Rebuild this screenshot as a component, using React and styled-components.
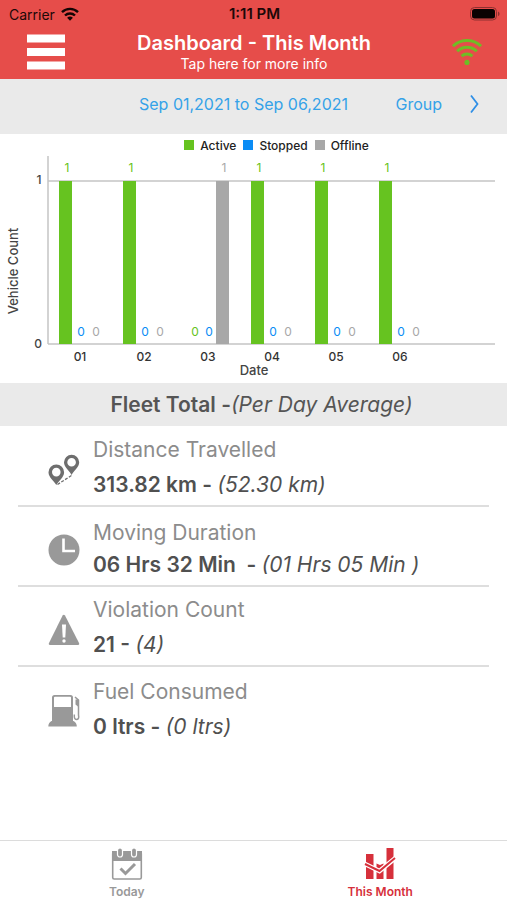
import React from 'react';
import styled, { createGlobalStyle } from 'styled-components';

const days = [
  { label: '01', values: [1, 0, 0] },
  { label: '02', values: [1, 0, 0] },
  { label: '03', values: [0, 0, 1] },
  { label: '04', values: [1, 0, 0] },
  { label: '05', values: [1, 0, 0] },
  { label: '06', values: [1, 0, 0] },
];

const series = [
  { name: 'Active', color: '#66c320' },
  { name: 'Stopped', color: '#0a8cf5' },
  { name: 'Offline', color: '#a8a8a8' },
];

const GlobalStyle = createGlobalStyle`
  * {
    box-sizing: border-box;
  }

  body {
    margin: 0;
    background: #fff;
    font-family: Inter, 'Liberation Sans', sans-serif;
  }

  button {
    border: 0;
    padding: 0;
    background: none;
    font-family: inherit;
    cursor: pointer;
  }
`;

const Screen = styled.div`
  display: flex;
  flex-direction: column;
  min-height: 100vh;
`;

const Header = styled.header`
  background: #e64d4a;
`;

const StatusBar = styled.div`
  display: grid;
  grid-template-columns: 1fr auto 1fr;
  align-items: center;
  height: 28px;
  padding: 0 7px 0 9px;
  color: #1c0808;
  font-size: 14px;
`;

const Carrier = styled.div`
  display: flex;
  align-items: center;
  gap: 6px;
`;

const Clock = styled.div`
  font-size: 15px;
  line-height: 16px;
  font-weight: 600;
`;

const Battery = styled.svg`
  justify-self: end;
`;

const TitleBar = styled.div`
  display: grid;
  grid-template-columns: 56px 1fr 66px;
  align-items: center;
  height: 51px;
  padding: 0 7px 3px 18px;
`;

const IconButton = styled.button`
  display: flex;
  justify-content: center;
  align-items: center;
  height: 48px;
`;

const TitleButton = styled.button`
  color: #fff;
  text-align: center;
`;

const Title = styled.h1`
  margin: 0;
  font-size: 20px;
  line-height: 24px;
  font-weight: 600;
`;

const Subtitle = styled.div`
  font-size: 14px;
  line-height: 18px;
`;

const FilterBar = styled.div`
  display: grid;
  grid-template-columns: 1fr auto 1fr;
  align-items: center;
  height: 55px;
  padding: 0 28px 6px 8px;
  background: #eaeaea;
`;

const FilterButton = styled.button`
  display: flex;
  align-items: center;
  gap: 28px;
  grid-column: ${(props) => props.$column};
  justify-self: ${(props) => (props.$column === 3 ? 'end' : 'center')};
  color: #35a2e8;
  font-size: 16px;
  line-height: 24px;
`;

const ChartCard = styled.section`
  min-height: 249px;
`;

const Legend = styled.div`
  display: flex;
  justify-content: center;
  gap: 7px;
  height: 22px;
  padding-left: 46px;
`;

const LegendItem = styled.div`
  display: flex;
  align-items: center;
  gap: 6px;
  color: #222;
  font-size: 12px;
  font-weight: 500;

  &::before {
    content: '';
    width: 10px;
    height: 10px;
    background: ${(props) => props.$color};
  }
`;

const Plot = styled.svg`
  display: block;
  width: 100%;
  font-size: 12px;
  font-weight: 500;
`;

const SectionHeading = styled.h2`
  margin: 0;
  padding-left: 16px;
  background: #eaeaea;
  color: #555;
  font-size: 21px;
  line-height: 43px;
  font-weight: 600;
  text-align: center;
`;

const Average = styled.em`
  font-weight: 400;
`;

const Stats = styled.main`
  flex: 1;
  padding: 1px 18px 0;
`;

const StatRow = styled.div`
  display: flex;
  align-items: center;
  gap: 13px;
  height: 80px;
  padding: 8px 0 0 30px;
  border-bottom: ${(props) => (props.$last ? '0' : '2px solid #dedede')};
`;

const StatText = styled.div`
  display: flex;
  flex-direction: column;
  gap: ${(props) => (props.$tight ? '4px' : '7px')};
  align-self: flex-end;
  padding-bottom: 6px;
  line-height: 28px;
  white-space: pre;
`;

const StatName = styled.div`
  color: #8c8c8c;
  font-size: 21px;
`;

const StatValue = styled.div`
  color: #505050;
  font-size: 21px;
  font-weight: 600;
`;

const TabBar = styled.nav`
  display: grid;
  grid-template-columns: 1fr 1fr;
  height: 60px;
  border-top: 1px solid #dcdcdc;
`;

const Tab = styled.button`
  display: flex;
  flex-direction: column;
  align-items: center;
  gap: 4px;
  padding-top: 7px;
  color: ${(props) => (props.$active ? '#d6303b' : '#999')};
  font-size: 12px;
  line-height: 16px;
  font-weight: 600;
`;

const CarrierWifi = () => (
  <svg width="18" height="14" viewBox="0 0 18 14" fill="none" stroke="#140404" strokeWidth="2.4">
    <path d="M1 5.2a11.4 11.4 0 0 1 16 0" />
    <path d="M4 8.5a7.2 7.2 0 0 1 10 0" />
    <path d="M9 13.8 6.1 10.8a4.2 4.2 0 0 1 5.8 0z" fill="#140404" stroke="none" />
  </svg>
);

const BatteryIcon = () => (
  <Battery width="30" height="14" viewBox="0 0 30 14">
    <rect x="0.5" y="0.5" width="26" height="12.5" rx="4" fill="none" stroke="#8d3130" />
    <rect x="2" y="2" width="23" height="9.5" rx="2.5" fill="#0a0202" />
    <path d="M28 4.5c2 .8 2 3.8 0 4.6z" fill="#8d3130" />
  </Battery>
);

const MenuIcon = () => (
  <svg width="38" height="36" viewBox="0 0 38 36" fill="#fff">
    <rect width="38" height="8" y="0.5" />
    <rect width="38" height="8" y="14" />
    <rect width="38" height="8" y="27.5" />
  </svg>
);

const SignalIcon = () => (
  <svg width="30" height="27" viewBox="0 0 30 27" fill="none" stroke="#6fbd25" strokeWidth="3">
    <path d="M1 7.2a20 20 0 0 1 28 0" />
    <path d="M5.2 12.2a14 14 0 0 1 19.6 0" />
    <path d="M9.6 17.2a8 8 0 0 1 10.8 0" />
    <circle cx="15" cy="23.4" r="2.6" fill="#6fbd25" stroke="none" />
  </svg>
);

const ChevronIcon = () => (
  <svg width="9" height="20" viewBox="0 0 9 20" fill="none" stroke="#2f8fe6" strokeWidth="1.8">
    <path d="M1 1.5 7.5 10 1 18.5" />
  </svg>
);

const RouteIcon = () => (
  <svg width="32" height="32" viewBox="0 0 32 32" fill="#6e6e6e">
    <path fillRule="evenodd" d="M8.3 31C6 26.5 .5 23.5 .5 18.2a7.800 7.800 0 0 1 15.600 0C16.100 23.500 10.600 26.500 8.300 31zM8.300 13.800a4.300 4.300 0 1 0 0 8.600 4.300 4.300 0 0 0 0-8.600z" />
    <path fillRule="evenodd" d="M23.600 21C21.300 16.500 16 13.500 16 8.300a7.600 7.600 0 0 1 15.200 0C31.200 13.500 25.900 16.500 23.600 21zM23.600 4a4.300 4.300 0 1 0 0 8.600 4.300 4.300 0 0 0 0-8.600z" />
    <path d="M9.500 30.500 23.500 21.500" stroke="#6e6e6e" strokeWidth="1.300" strokeDasharray="3 1.500" />
  </svg>
);

const ClockIcon = () => (
  <svg width="32" height="32" viewBox="0 0 32 32">
    <circle cx="16" cy="16" r="15.500" fill="#999" />
    <path d="M15.500 4.500v12.500H27" fill="none" stroke="#fff" strokeWidth="2.600" />
  </svg>
);

const WarningIcon = () => (
  <svg width="32" height="32" viewBox="0 0 32 32">
    <path d="M14.600 1.600q1.200-1.800 2.400 0L31 29q.8 2-1.200 2H2.200q-2 0-1.200-2z" fill="#999" />
    <path d="M14 10.500h4l-.7 13h-2.600z" fill="#fff" />
    <circle cx="16" cy="27" r="1.700" fill="#fff" />
  </svg>
);

const FuelIcon = () => (
  <svg width="32" height="32" viewBox="0 0 32 32" fill="#999">
    <path fillRule="evenodd" d="M6.500 0h16Q25 0 25 2.500V26H4V2.500Q4 0 6.500 0zM6 2.500V12h17V2.500Q23 1.800 22 1.800H7Q6 1.800 6 2.500z" />
    <path d="M3.500 26h22q3.300 1.500 3.300 5.500H.3q0-4 3.200-5.500z" />
    <path d="M27 2l3.500 3.200V20q1 4.500-2.200 4.500-2.300 0-2-5" fill="none" stroke="#999" strokeWidth="1.500" />
    <path d="M27.500 4.500h3v7.500l-3-2.500z" />
  </svg>
);

const CalendarIcon = () => (
  <svg width="32" height="32" viewBox="0 0 32 32">
    <path d="M1 3h30v10H1z" fill="#999" />
    <rect x="1.700" y="4" width="28.600" height="27" rx="1.500" fill="none" stroke="#999" strokeWidth="1.600" />
    <rect x="6.500" y="0" width="5" height="9" rx="2.500" fill="#999" stroke="#fff" strokeWidth="1.200" />
    <rect x="20.500" y="0" width="5" height="9" rx="2.500" fill="#999" stroke="#fff" strokeWidth="1.200" />
    <path d="M9.500 20.500l5 5 9.500-9.500" fill="none" stroke="#999" strokeWidth="3" />
  </svg>
);

const MonthIcon = () => (
  <svg width="32" height="32" viewBox="0 0 32 32">
    <g fill="#d6303b">
      <rect x="2" y="6" width="7.500" height="25" />
      <path d="M12.500 15.500l3.500 1.500 3.500-1.500V31h-7z" />
      <rect x="22.500" y="0" width="7" height="31" />
    </g>
    <path d="M0 15.500l15.500 7.500L32 9.500" fill="none" stroke="#fff" strokeWidth="4.600" />
    <path d="M1 16l14.500 7L31 10" fill="none" stroke="#d6303b" strokeWidth="2" />
  </svg>
);

const VehicleChart = () => (
  <Plot viewBox="0 0 507 227" role="img" aria-label="Vehicle count by date" textAnchor="middle">
    <g stroke="#c4c4c4" strokeWidth="1.500">
      <path d="M48 0V188" />
      <path d="M48 25H495" />
      <path d="M48 188H495" />
    </g>
    <g fill="#444">
      <text x="39" y="28">1</text>
      <text x="38" y="192">0</text>
      <text transform="translate(18 115) rotate(-90)" fontSize="13">Vehicle Count</text>
      <text x="254" y="219" fontSize="13">Date</text>
    </g>
    {days.map((day, i) => (
      <g key={day.label} transform={`translate(${59 + i * 64} 0)`}>
        {day.values.map((value, s) => (
          <g key={series[s].name} fill={series[s].color}>
            {value > 0 && <rect x={s * 15 - (s ? 1 : 0)} y="25" width="13" height="163" />}
            <text x={8 + s * 15 - (s ? 1 : 0)} y={value > 0 ? 16 : 180} fontWeight="400">
              {value}
            </text>
          </g>
        ))}
        <text x="21" y="205" fill="#333">{day.label}</text>
      </g>
    ))}
  </Plot>
);

const stats = [
  { name: 'Distance Travelled', total: '313.82 km - ', average: '(52.30 km)', Icon: RouteIcon },
  { name: 'Moving Duration', total: '06 Hrs 32 Min  - ', average: '(01 Hrs 05 Min )', Icon: ClockIcon, tight: true },
  { name: 'Violation Count', total: '21 - ', average: '(4)', Icon: WarningIcon },
  { name: 'Fuel Consumed', total: '0 ltrs - ', average: '(0 ltrs)', Icon: FuelIcon },
];

const App = () => {
  return (
    <Screen>
      <GlobalStyle />
      <Header>
        <StatusBar>
          <Carrier>
            Carrier
            <CarrierWifi />
          </Carrier>
          <Clock>1:11 PM</Clock>
          <BatteryIcon />
        </StatusBar>
        <TitleBar>
          <IconButton aria-label="Menu">
            <MenuIcon />
          </IconButton>
          <TitleButton>
            <Title>Dashboard - This Month</Title>
            <Subtitle>Tap here for more info</Subtitle>
          </TitleButton>
          <IconButton aria-label="Connection">
            <SignalIcon />
          </IconButton>
        </TitleBar>
      </Header>
      <FilterBar>
        <FilterButton $column={2}>Sep 01,2021 to Sep 06,2021</FilterButton>
        <FilterButton $column={3}>
          Group
          <ChevronIcon />
        </FilterButton>
      </FilterBar>
      <ChartCard>
        <Legend>
          {series.map((item) => (
            <LegendItem key={item.name} $color={item.color}>
              {item.name}
            </LegendItem>
          ))}
        </Legend>
        <VehicleChart />
      </ChartCard>
      <SectionHeading>
        Fleet Total -<Average>(Per Day Average)</Average>
      </SectionHeading>
      <Stats>
        {stats.map(({ name, total, average, Icon, tight }, index) => (
          <StatRow key={name} $last={index === stats.length - 1}>
            <Icon />
            <StatText $tight={tight}>
              <StatName>{name}</StatName>
              <StatValue>
                {total}
                <Average>{average}</Average>
              </StatValue>
            </StatText>
          </StatRow>
        ))}
      </Stats>
      <TabBar>
        <Tab>
          <CalendarIcon />
          Today
        </Tab>
        <Tab $active>
          <MonthIcon />
          This Month
        </Tab>
      </TabBar>
    </Screen>
  );
};

export default App;
